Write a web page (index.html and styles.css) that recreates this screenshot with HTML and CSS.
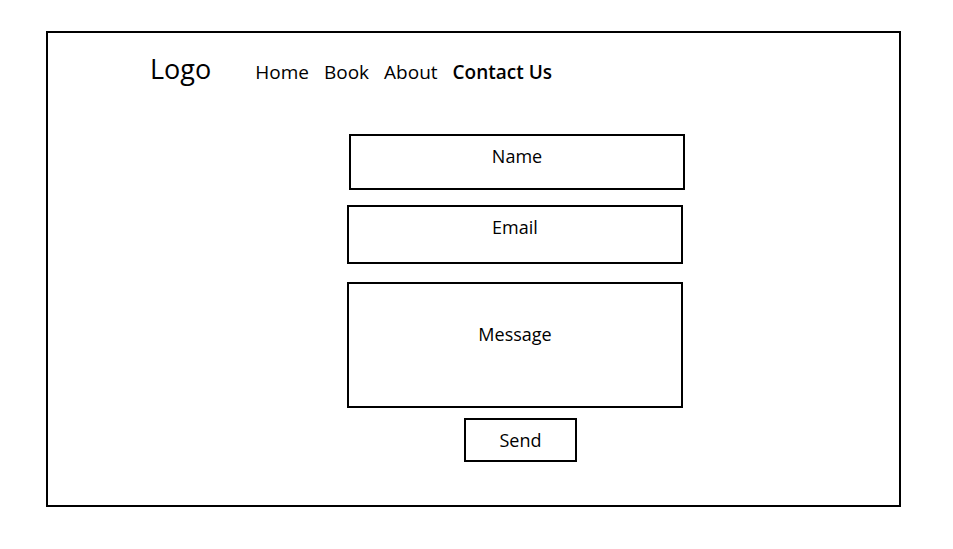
FILE: index.html
```html
<!DOCTYPE html>
<html lang="en">
  <head>
    <meta charset="UTF-8" />
    <meta name="viewport" content="width=device-width, initial-scale=1.0" />
    <title>Contact Us</title>

    <!-- CSS -->
    <link rel="stylesheet" href="styles.css">
  </head>
  <body>
    <div class="frame">
      <header class="top">
        <div class="logo">Logo</div>
        <nav class="menu">
          <a href="#">Home</a>
          <a href="#">Book</a>
          <a href="#">About</a>
          <a href="#" class="current">Contact Us</a>
        </nav>
      </header>

      <form class="contact">
        <div class="field field-name">Name</div>
        <div class="field field-email">Email</div>
        <div class="field field-message">Message</div>
        <div class="send">Send</div>
      </form>
    </div>
  </body>
</html>
```

FILE: styles.css
```css
html {
  font-family: "Open Sans", Lato, sans-serif;
}

body {
  margin: 0;
  background-color: #fff;
  color: #000;
}

.frame {
  box-sizing: border-box;
  width: 855px;
  height: 476px;
  margin: 31px 0 0 46px;
  border: 2px solid #000;
}

.top {
  display: flex;
  align-items: baseline;
  padding: 22px 0 0 102px;
}

.logo {
  font-size: 27px;
  line-height: 1;
  margin-right: 44px;
}

.menu {
  display: flex;
  gap: 15px;
}

.menu a {
  color: #000;
  text-decoration: none;
  font-size: 19px;
  line-height: 1;
}

.menu .current {
  font-weight: 600;
}

.contact {
  display: flex;
  flex-direction: column;
  align-items: flex-start;
  margin: 52px 0 0 299px;
}

.field {
  box-sizing: border-box;
  width: 336px;
  border: 2px solid #000;
  text-align: center;
  font-size: 18px;
  line-height: 20px;
  padding-top: 10px;
}

.field-name {
  height: 56px;
  margin-left: 2px;
}

.field-email {
  height: 59px;
  margin-top: 15px;
}

.field-message {
  height: 126px;
  margin-top: 18px;
  padding-top: 40px;
}

.send {
  box-sizing: border-box;
  width: 113px;
  height: 44px;
  margin: 10px 0 0 117px;
  border: 2px solid #000;
  text-align: center;
  font-size: 18px;
  line-height: 40px;
}
```
